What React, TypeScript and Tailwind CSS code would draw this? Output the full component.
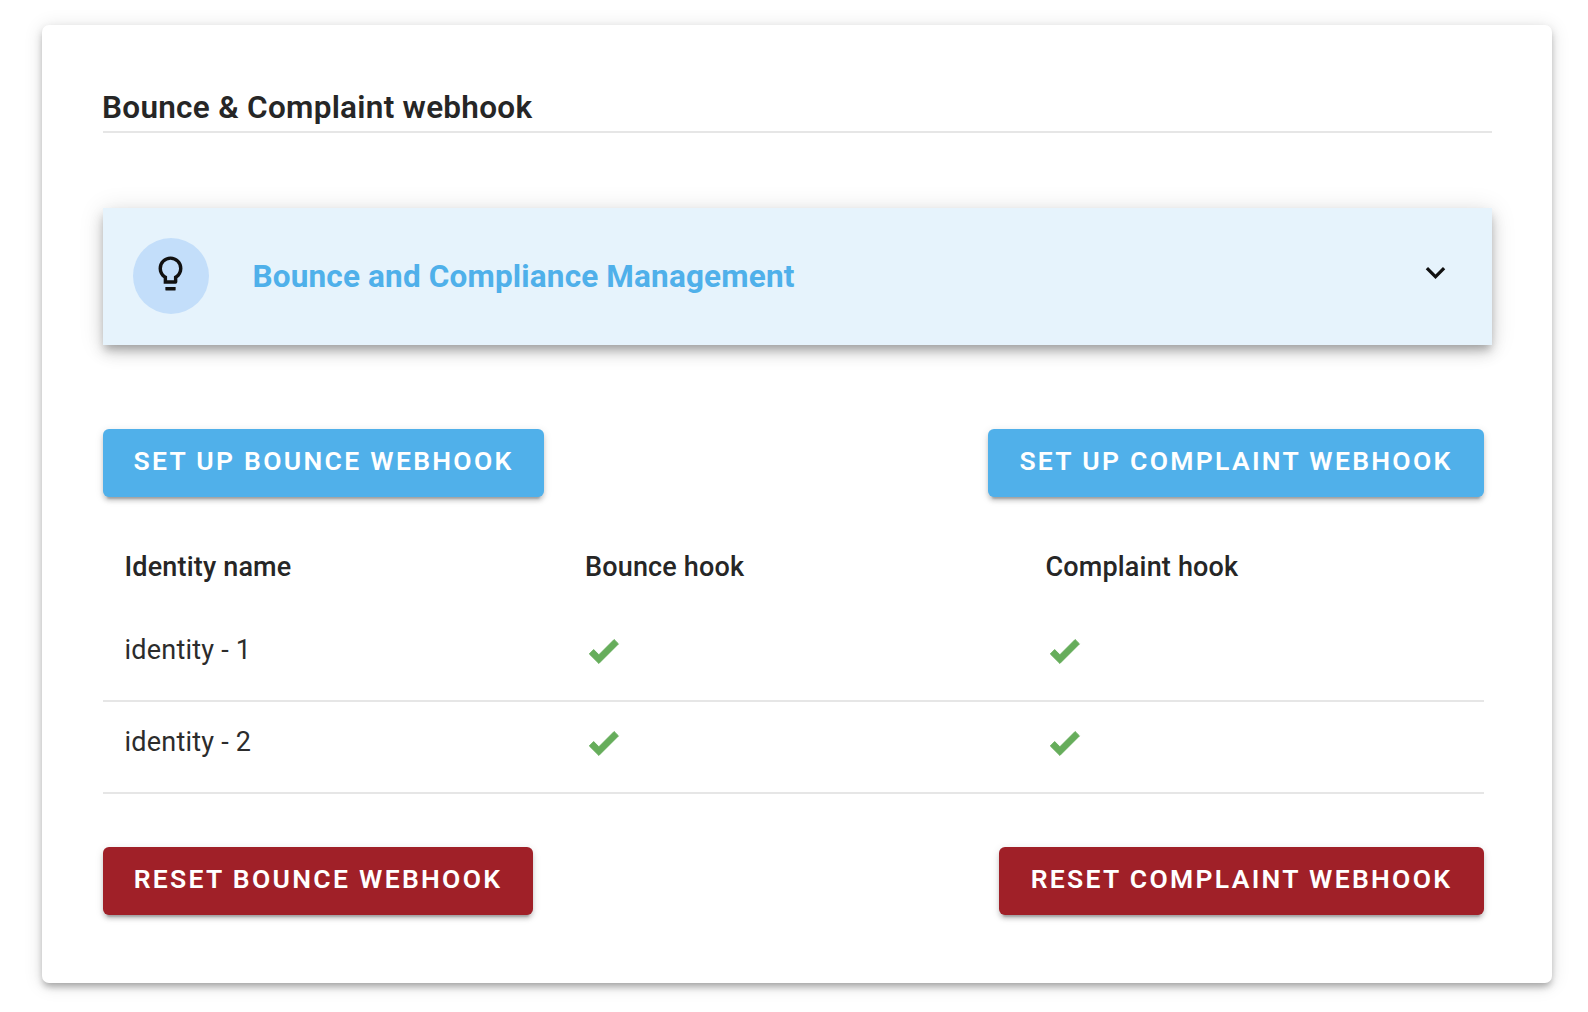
import React from "react";

const BTN =
  "flex h-[68px] items-start justify-center rounded-[6px] pt-[12px] text-[26.5px] leading-[40px] font-semibold whitespace-nowrap text-white shadow-[0_6px_2px_-4px_rgba(0,0,0,0.2),0_4px_4px_0_rgba(0,0,0,0.14),0_2px_9px_0_rgba(0,0,0,0.12)]";

function Check() {
  return (
    <svg
      viewBox="0 0 24 24"
      className="h-[37px] w-[37px] fill-[#66ad5b] stroke-[#66ad5b]"
      strokeWidth="0.6"
      strokeLinejoin="round"
    >
      <path d="M9,20.42L2.79,14.21L5.62,11.38L9,14.77L18.88,4.88L21.71,7.71L9,20.42Z" />
    </svg>
  );
}

function Row({ name }: { name: string }) {
  return (
    <div className="grid h-[92.5px] grid-cols-[460.5px_460.5px_1fr] border-b-2 border-[#e6e6e6]">
      <div className="pt-[20.5px] pl-[21.5px] text-[27px] leading-[40px] tracking-[0.22px] text-[#2c2c2c]">{name}</div>
      <div className="pt-[22.5px] pl-[21.5px]">
        <Check />
      </div>
      <div className="pt-[22.5px] pl-[21.5px]">
        <Check />
      </div>
    </div>
  );
}

export default function App() {
  return (
    <div className="h-[1012px] w-[1588px] overflow-hidden bg-white pt-[25px] pl-[42px] font-[Roboto,sans-serif] text-[#262626]">
      <main className="h-[958px] w-[1510px] rounded-[7px] bg-white pt-[59px] pl-[61px] shadow-[0_5px_6px_-2px_rgba(0,0,0,0.2),0_4px_9px_0_rgba(0,0,0,0.14),0_2px_19px_0_rgba(0,0,0,0.12)]">
        <h1 className="h-[49px] w-[1389px] border-b-2 border-[#e6e6e6] text-[31.5px] leading-[48px] font-semibold tracking-[0.28px]">
          <span className="-ml-px">Bounce &amp; Complaint webhook</span>
        </h1>
        <section className="mt-[75px] flex h-[137px] w-[1389px] bg-[#e6f3fc] pt-[30px] pl-[30px] shadow-[0_6px_8px_-2px_rgba(0,0,0,0.22),0_8px_14px_0_rgba(0,0,0,0.14),0_2px_24px_0_rgba(0,0,0,0.12)]">
          <div className="h-[76px] w-[76px] rounded-full bg-[#c3defa] pt-[15px] pl-[16.5px]">
            <svg viewBox="0 0 24 24" className="h-[41px] w-[41px] fill-[#111]">
              <path d="M12,2A7,7 0 0,1 19,9C19,11.38 17.81,13.47 16,14.74V17A1,1 0 0,1 15,18H8V14.74C6.19,13.47 5,11.38 5,9A7,7 0 0,1 12,2M9,21.5V19.9H15V21.5A0.5,0.5 0 0,1 14.5,22H9.5A0.5,0.5 0 0,1 9,21.5M12,4A5,5 0 0,0 7,9C7,11.05 8.23,12.81 10,13.58V16H14V13.58C15.77,12.81 17,11.05 17,9A5,5 0 0,0 12,4Z" />
            </svg>
          </div>
          <h2 className="mt-[14.5px] ml-[43.5px] h-[48px] text-[31.5px] leading-[48px] font-bold tracking-[0.16px] text-[#4fb0ea]">
            Bounce and Compliance Management
          </h2>
          <svg viewBox="0 0 24 24" className="mt-[14.5px] mr-[37px] ml-auto h-[39px] w-[39px] fill-[#111]">
            <path d="M7.41,8.58L12,13.17L16.59,8.58L18,10L12,16L6,10L7.41,8.58Z" />
          </svg>
        </section>
        <div className="mt-[84px] flex w-[1381px] justify-between">
          <button className={`${BTN} w-[441px] bg-[#50b0ea] tracking-[2.3px]`}>SET UP BOUNCE WEBHOOK</button>
          <button className={`${BTN} w-[496px] bg-[#50b0ea] tracking-[2.3px]`}>SET UP COMPLAINT WEBHOOK</button>
        </div>
        <div className="mt-[25px] w-[1381px]">
          <div className="grid h-[87px] grid-cols-[460.5px_460.5px_1fr] pt-[25px] text-[27px] leading-[40px] font-medium tracking-[0.17px]">
            <div className="pl-[21.5px]">Identity name</div>
            <div className="pl-[21.5px]">Bounce hook</div>
            <div className="pl-[21.5px]">Complaint hook</div>
          </div>
          <Row name="identity - 1" />
          <Row name="identity - 2" />
        </div>
        <div className="mt-[53px] flex w-[1381px] justify-between">
          <button className={`${BTN} w-[430px] bg-[#a02028] tracking-[2.3px]`}>RESET BOUNCE WEBHOOK</button>
          <button className={`${BTN} w-[485px] bg-[#a02028] tracking-[2.3px]`}>RESET COMPLAINT WEBHOOK</button>
        </div>
      </main>
    </div>
  );
}
